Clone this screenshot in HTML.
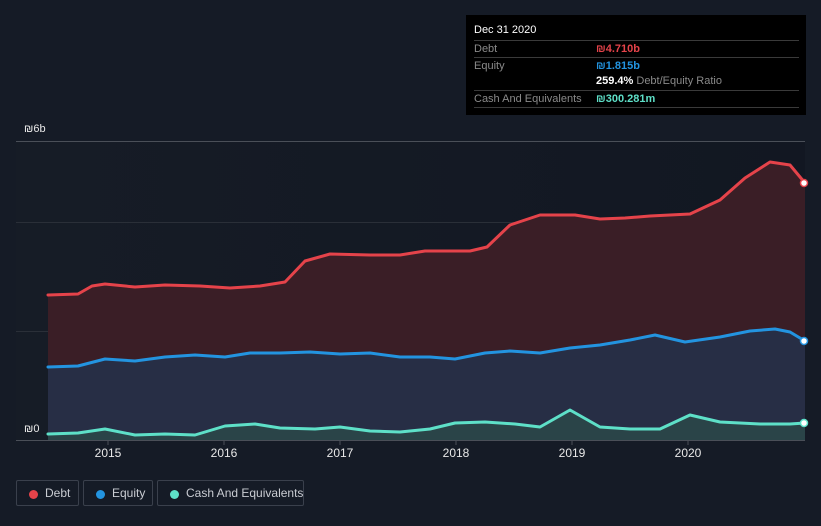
<!DOCTYPE html>
<html><head><meta charset="utf-8"><style>
body{margin:0;width:821px;height:526px;background:#151b26;font-family:"Liberation Sans",sans-serif;overflow:hidden;position:relative}
.tt{position:absolute;left:466px;top:15px;width:340px;height:100px;background:#000;color:#fff;font-size:11px}
.row{position:absolute;left:8px;width:325px;border-top:1px solid #3a3a3a;height:16px}
.lab{position:absolute;left:0;top:2px;color:#8a8a8a}
.val{position:absolute;left:122px;top:2px;font-weight:bold}
.leg{position:absolute;top:480px;height:26px;border:1px solid #3a404c;border-radius:2px;color:#c9ccd2;font-size:12px;line-height:26px;box-sizing:border-box;white-space:nowrap}
.leg i{position:absolute;left:12px;top:9px;width:9px;height:9px;border-radius:50%}
.leg span{position:absolute;left:28px;top:-1px}
</style></head><body>
<svg width="821" height="526" style="position:absolute;left:0;top:0">
<defs><linearGradient id="bg" x1="0" x2="1"><stop offset="0" stop-color="#161c26"/><stop offset="1" stop-color="#121722"/></linearGradient></defs>
<rect x="16" y="141" width="789" height="299" fill="url(#bg)"/>
<line x1="16" y1="141.5" x2="805" y2="141.5" stroke="#4a4f58"/>
<line x1="16" y1="222.5" x2="805" y2="222.5" stroke="#2a2f38"/>
<line x1="16" y1="331.5" x2="805" y2="331.5" stroke="#2a2f38"/>
<line x1="16" y1="440.5" x2="805" y2="440.5" stroke="#4a4f58"/>
<path d="M48,295 L78,294 92,286 105,284 135,287 165,285 200,286 230,288 260,286 285,282 305,261 330,254 370,255 400,255 425,251 470,251 487,247 510,225 540,215 575,215 600,219 625,218 650,216 690,214 720,200 745,178 770,162 790,165 805,183 L805,440 48,440Z" fill="#3a1e26"/>
<path d="M48,367 L78,366 105,359 135,361 165,357 195,355 225,357 250,353 280,353 310,352 340,354 370,353 400,357 430,357 455,359 485,353 510,351 540,353 570,348 600,345 630,340 655,335 685,342 720,337 750,331 775,329 790,332 805,341 L805,440 48,440Z" fill="#272e45"/>
<path d="M48,434 L78,433 105,429 135,435 165,434 195,435 225,426 255,424 280,428 315,429 340,427 370,431 400,432 430,429 455,423 485,422 515,424 540,427 570,410 600,427 630,429 660,429 690,415 720,422 760,424 790,424 805,423 L805,440 48,440Z" fill="#2a4448"/>
<g fill="none" stroke-width="3" stroke-linejoin="round" stroke-linecap="round">
<path d="M48,295 L78,294 92,286 105,284 135,287 165,285 200,286 230,288 260,286 285,282 305,261 330,254 370,255 400,255 425,251 470,251 487,247 510,225 540,215 575,215 600,219 625,218 650,216 690,214 720,200 745,178 770,162 790,165 805,183" stroke="#e5434a"/>
<path d="M48,367 L78,366 105,359 135,361 165,357 195,355 225,357 250,353 280,353 310,352 340,354 370,353 400,357 430,357 455,359 485,353 510,351 540,353 570,348 600,345 630,340 655,335 685,342 720,337 750,331 775,329 790,332 805,341" stroke="#2394e0"/>
<path d="M48,434 L78,433 105,429 135,435 165,434 195,435 225,426 255,424 280,428 315,429 340,427 370,431 400,432 430,429 455,423 485,422 515,424 540,427 570,410 600,427 630,429 660,429 690,415 720,422 760,424 790,424 805,423" stroke="#5ee0c8"/>
</g>
<circle cx="804" cy="183" r="3.5" fill="#fff" stroke="#e5434a" stroke-width="1.5"/>
<circle cx="804" cy="341" r="3.5" fill="#fff" stroke="#2394e0" stroke-width="1.5"/>
<circle cx="804" cy="423" r="3.5" fill="#fff" stroke="#5ee0c8" stroke-width="1.5"/>
<g stroke="#4a4f58"><line x1="108" y1="441" x2="108" y2="445"/><line x1="224" y1="441" x2="224" y2="445"/><line x1="340" y1="441" x2="340" y2="445"/><line x1="456" y1="441" x2="456" y2="445"/><line x1="572" y1="441" x2="572" y2="445"/><line x1="688" y1="441" x2="688" y2="445"/></g>
<g fill="#e8e8e8" font-size="12" text-anchor="middle" font-family="Liberation Sans"><text x="108" y="457">2015</text><text x="224" y="457">2016</text><text x="340" y="457">2017</text><text x="456" y="457">2018</text><text x="572" y="457">2019</text><text x="688" y="457">2020</text></g>
<text x="24" y="132" fill="#e8e8e8" font-size="11">₪6b</text>
<text x="24" y="432" fill="#e8e8e8" font-size="11">₪0</text>
</svg>
<div class="tt">
<div style="position:absolute;left:8px;top:9px">Dec 31 2020</div>
<div class="row" style="top:25px"><span class="lab">Debt</span><span class="val" style="color:#e5434a">₪4.710b</span></div>
<div class="row" style="top:42px"><span class="lab">Equity</span><span class="val" style="color:#2394e0">₪1.815b</span></div>
<div style="position:absolute;left:130px;top:60px"><b>259.4%</b> <span style="color:#8a8a8a">Debt/Equity Ratio</span></div>
<div class="row" style="top:75px;border-bottom:1px solid #3a3a3a"><span class="lab">Cash And Equivalents</span><span class="val" style="color:#5ee0c8">₪300.281m</span></div>
</div>
<div class="leg" style="left:16px;width:63px"><i style="background:#e5434a"></i><span>Debt</span></div>
<div class="leg" style="left:83px;width:70px"><i style="background:#2394e0"></i><span>Equity</span></div>
<div class="leg" style="left:157px;width:147px"><i style="background:#5ee0c8"></i><span>Cash And Equivalents</span></div>
</body></html>
